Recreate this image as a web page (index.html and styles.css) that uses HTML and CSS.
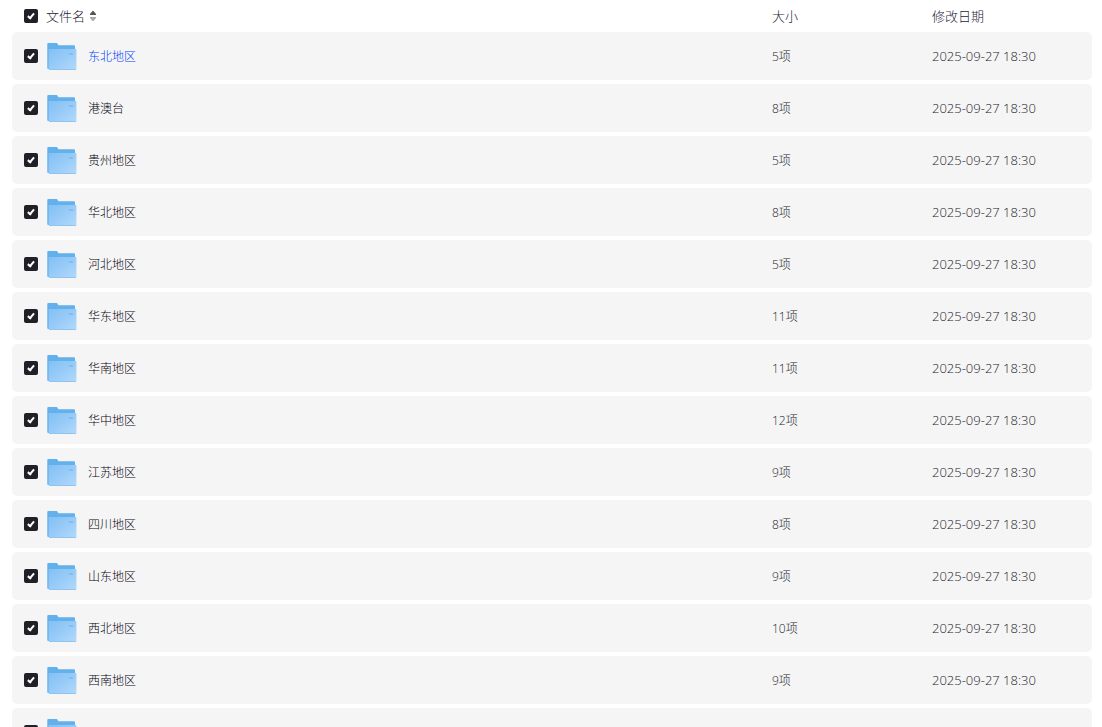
FILE: index.html
```
<!DOCTYPE html>
<html lang="zh-CN">
<head>
  <meta charset="UTF-8" />
  <meta name="viewport" content="width=device-width, initial-scale=1.0" />
  <title>文件列表</title>
  <link rel="stylesheet" href="styles.css">
</head>
<body>
  <svg class="defs" aria-hidden="true">
    <defs>
      <linearGradient id="front" x1="0" y1="0" x2="1" y2="1">
        <stop offset="0" stop-color="#82c0f4" />
        <stop offset="0.5" stop-color="#98cbf8" />
        <stop offset="1" stop-color="#b2d9fb" />
      </linearGradient>
      <symbol id="folder" viewBox="0 0 32 32">
        <path fill="#62b0ec" d="M1.3 4Q1.3 3 2.3 3H10.4Q11.2 3 11.6 3.8L12.4 5.2H28Q29 5.2 29 6.2V29H2.3Q1.3 29 1.3 28Z" />
        <path fill="url(#front)" d="M2.6 9H29.5Q30.4 9 30.4 10V28.6Q30.4 29.6 29.4 29.6H3.4Q2.6 29.6 2.6 28.6Z" />
        <path fill="#8fc4ee" d="M3 29H30V30H3Z" />
        <path fill="#84bceb" d="M23 13H27V15H23Z" />
      </symbol>
    </defs>
  </svg>

  <table class="file-list">
    <thead>
      <tr>
        <th class="col-check"><input type="checkbox" id="all" aria-label="全选" checked /></th>
        <th class="col-name">
          <button class="sort" type="button">文件名
            <svg class="sort-icon" viewBox="0 0 8 12" aria-hidden="true">
              <path fill="#555" d="M3.5 1H4.5L7 4V5H1V4Z" />
              <path fill="#aaa" d="M1 7H7V8L4.5 11H3.5L1 8Z" />
            </svg>
          </button>
        </th>
        <th class="col-size">大小</th>
        <th class="col-date">修改日期</th>
      </tr>
    </thead>
    <tbody id="rows"></tbody>
  </table>

  <script src="script.js"></script>
</body>
</html>
```
FILE: styles.css
```
* {
  box-sizing: border-box;
}

body {
  margin: 0;
  padding: 0 10px 0 12px;
  height: 100vh;
  overflow: hidden;
  background: #fff;
  color: #03040d;
  font-family: "Open Sans", "Noto Sans CJK SC", sans-serif;
  font-size: 12px;
  font-weight: 300;
  line-height: 18px;
}

.defs {
  position: absolute;
  width: 0;
  height: 0;
}

.file-list {
  width: 100%;
  table-layout: fixed;
  border-collapse: separate;
  border-spacing: 0 4px;
}

th {
  height: 24px;
  padding: 0;
  text-align: left;
  font-size: 13px;
  font-weight: 300;
  line-height: 16px;
  color: #1c1c34;
}

td {
  height: 48px;
  padding: 0;
  background: #f5f5f5;
}

td:first-child {
  border-radius: 5px 0 0 5px;
}

td:last-child {
  border-radius: 0 5px 5px 0;
}

.col-check {
  width: 34px;
  padding-left: 12px;
}

.col-size,
.col-date {
  width: 160px;
}

td.col-size,
td.col-date {
  color: #24242c;
}

td.col-size {
  padding-top: 1px;
}

td.col-date {
  font-size: 13px;
}

input[type="checkbox"] {
  appearance: none;
  display: block;
  width: 14px;
  height: 14px;
  margin: 0;
  border-radius: 2px;
  background: #202127;
  cursor: pointer;
}

input[type="checkbox"]:checked::after {
  content: "";
  display: block;
  box-sizing: border-box;
  width: 4px;
  height: 7px;
  margin: 0 auto;
  border: solid #fff;
  border-width: 0 2px 2px 0;
  transform: translateY(3px) rotate(40deg);
}

.sort {
  display: flex;
  align-items: center;
  gap: 4px;
  padding: 0;
  border: none;
  background: none;
  color: inherit;
  font: inherit;
  cursor: pointer;
}

.sort-icon {
  width: 8px;
  height: 12px;
}

.file {
  display: flex;
  align-items: center;
  gap: 10px;
  color: inherit;
  text-decoration: none;
}

.file span {
  padding-top: 2px;
}

.file.active {
  color: #0040ff;
}

.folder {
  width: 32px;
  height: 32px;
}
```
FILE: script.js
```
const files = [
  ['东北地区', '5项'],
  ['港澳台', '8项'],
  ['贵州地区', '5项'],
  ['华北地区', '8项'],
  ['河北地区', '5项'],
  ['华东地区', '11项'],
  ['华南地区', '11项'],
  ['华中地区', '12项'],
  ['江苏地区', '9项'],
  ['四川地区', '8项'],
  ['山东地区', '9项'],
  ['西北地区', '10项'],
  ['西南地区', '9项'],
  ['', '']
];

document.getElementById('rows').innerHTML = files.map(([name, size], i) => `
  <tr>
    <td class="col-check"><input type="checkbox" aria-labelledby="file-${i}" checked /></td>
    <td class="col-name">
      <a class="file${i === 0 ? ' active' : ''}" id="file-${i}" href="#">
        <svg class="folder" aria-hidden="true"><use href="#folder" /></svg>
        <span>${name}</span>
      </a>
    </td>
    <td class="col-size">${size}</td>
    <td class="col-date">${size ? '2025-09-27 18:30' : ''}</td>
  </tr>`).join('');

document.getElementById('all').addEventListener('change', (e) => {
  document.querySelectorAll('#rows input').forEach((box) => {
    box.checked = e.target.checked;
  });
});
```
